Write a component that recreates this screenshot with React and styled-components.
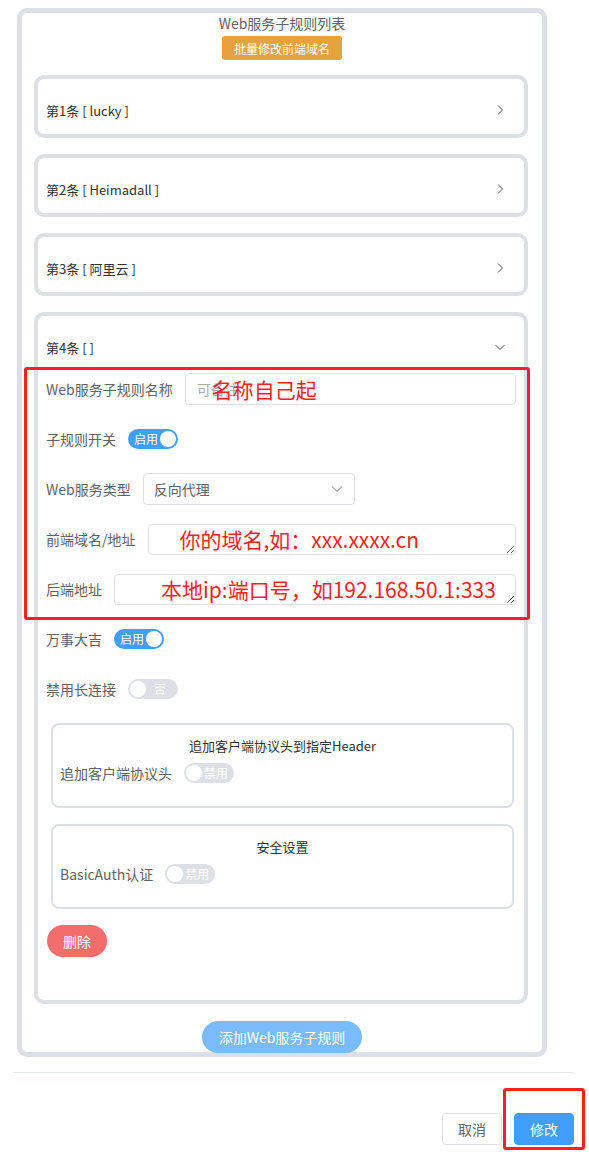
import React from 'react';
import styled, { createGlobalStyle } from 'styled-components';

const GlobalStyle = createGlobalStyle`
  body {
    margin: 0;
    background: #fff;
    font-family: "Noto Sans CJK SC", "Noto Sans", "Liberation Sans", sans-serif;
    color: #606266;
  }
  * { box-sizing: border-box; }
`;

const Page = styled.div`
  position: relative;
  height: 1163px;
  overflow: hidden;
  padding-top: 8px;
`;

const RuleList = styled.div`
  margin-left: 17px;
  width: 530px;
  border: 5px solid #dcdfe6;
  border-radius: 10px;
  display: flex;
  flex-direction: column;
  align-items: center;
`;

const ListTitle = styled.div`
  font-size: 14px;
  line-height: 20px;
  color: #606266;
`;

const BatchButton = styled.button`
  margin-top: 3px;
  height: 24px;
  padding: 0 12px;
  border: none;
  border-radius: 3px;
  background: #e6a23c;
  color: #fff;
  font-family: inherit;
  font-size: 12px;
`;

const Cards = styled.div`
  align-self: stretch;
  margin-top: 15px;
  padding: 0 14px 0 12px;
`;

const Card = styled.div`
  border: 4px solid #dcdfe6;
  border-radius: 10px;
  margin-bottom: 16px;
  padding: 0 8px ${p => (p.$open ? '43px' : '1px')};
`;

const CardHeader = styled.div`
  display: flex;
  align-items: center;
  justify-content: space-between;
  height: 44px;
  margin-top: 9px;
  margin-bottom: 1px;
  font-size: 13px;
  color: #303133;
`;

const Arrow = styled.svg`
  width: 12px;
  height: 12px;
  margin-right: 10px;
  fill: none;
  stroke: #4a4c52;
  stroke-width: 1;
`;

const Form = styled.div`
  padding-top: 3px;
`;

const Item = styled.div`
  display: flex;
  align-items: center;
  height: 32px;
  margin-bottom: 18px;
`;

const Label = styled.label`
  font-size: 14px;
  line-height: 32px;
  color: #606266;
  padding-right: 12px;
  white-space: nowrap;
`;

const Field = styled.div`
  position: relative;
  flex: ${p => (p.$width ? 'none' : '1')};
  width: ${p => (p.$width ? `${p.$width}px` : 'auto')};
  height: ${p => p.$h || 32}px;
`;

const TextInput = styled.input`
  width: 100%;
  height: 100%;
  border: 1px solid #dcdfe6;
  border-radius: 4px;
  padding: 0 11px;
  font-family: inherit;
  font-size: 14px;
  color: #606266;
  outline: none;
  &::placeholder { color: #a8abb2; }
`;

const TextArea = styled.textarea`
  display: block;
  width: 100%;
  height: 100%;
  border: 1px solid #dcdfe6;
  border-radius: 4px;
  padding: 4px 11px;
  font-family: inherit;
  font-size: 14px;
  resize: vertical;
  outline: none;
`;

const SelectBox = styled.div`
  display: flex;
  align-items: center;
  justify-content: space-between;
  height: 100%;
  border: 1px solid #dcdfe6;
  border-radius: 4px;
  padding: 0 11px 0 10px;
  font-size: 14px;
  color: #606266;
`;

const SelectArrow = styled.svg`
  width: 12px;
  height: 12px;
  fill: none;
  stroke: #a8abb2;
  stroke-width: 1.2;
`;

const Note = styled.span`
  position: absolute;
  left: ${p => p.$left}px;
  top: 50%;
  transform: translateY(-50%);
  font-size: 21px;
  line-height: 28px;
  color: #ff1f1f;
  white-space: nowrap;
  pointer-events: none;
`;

const SwitchTrack = styled.span`
  display: inline-flex;
  align-items: center;
  flex-direction: ${p => (p.$on ? 'row' : 'row-reverse')};
  justify-content: space-between;
  width: 50px;
  height: 20px;
  border-radius: 10px;
  padding: 0 2px;
  background: ${p => (p.$on ? '#409eff' : '#dcdfe6')};
`;

const SwitchText = styled.span`
  flex: 1;
  text-align: center;
  font-size: 12px;
  line-height: 20px;
  color: #fff;
  padding-${p => (p.$on ? 'left' : 'right')}: 2px;
`;

const Knob = styled.span`
  width: 16px;
  height: 16px;
  border-radius: 50%;
  background: #fff;
  flex: none;
`;

const SubBox = styled.div`
  margin: 0 2px 16px 5px;
  border: 2px solid #dcdfe6;
  border-radius: 8px;
  padding: 10px 7px 0;
  height: 85px;
`;

const SubTitle = styled.div`
  text-align: center;
  font-size: 13px;
  line-height: 22px;
  color: #303133;
`;

const SubItem = styled(Item)`
  margin-bottom: 0;
`;

const PillButton = styled.button`
  height: 32px;
  border: none;
  border-radius: 16px;
  padding: 0 ${p => p.$pad || 15}px;
  background: ${p => p.$bg};
  color: #fff;
  font-family: inherit;
  font-size: 14px;
  margin-left: ${p => p.$ml || 0}px;
`;

const AddRow = styled.div`
  margin-top: 1px;
  margin-bottom: -1px;
`;

const Divider = styled.div`
  margin: 15px 15px 0 14px;
  height: 1px;
  background: #e4e7ed;
`;

const Footer = styled.div`
  display: flex;
  justify-content: flex-end;
  gap: 12px;
  padding: 40px 15px 0 0;
`;

const FooterButton = styled.button`
  width: ${p => p.$w}px;
  height: 32px;
  border-radius: 4px;
  border: 1px solid ${p => (p.$primary ? '#409eff' : '#dcdfe6')};
  background: ${p => (p.$primary ? '#409eff' : '#fff')};
  color: ${p => (p.$primary ? '#fff' : '#606266')};
  font-family: inherit;
  font-size: 14px;
`;

const Highlight = styled.div`
  position: absolute;
  left: ${p => p.$x}px;
  top: ${p => p.$y}px;
  width: ${p => p.$w}px;
  height: ${p => p.$h}px;
  border: 3px solid #ff1f1f;
  border-radius: 3px;
  pointer-events: none;
`;

const ChevronRight = () => (
  <Arrow viewBox="0 0 12 12"><polyline points="4,1.5 8.5,6 4,10.5" /></Arrow>
);

const ChevronDown = () => (
  <Arrow viewBox="0 0 12 12"><polyline points="1.5,4 6,8.5 10.5,4" /></Arrow>
);

const Switch = ({ on, text }) => (
  <SwitchTrack $on={on}>
    <SwitchText $on={on}>{text}</SwitchText>
    <Knob />
  </SwitchTrack>
);

const collapsed = ['lucky', 'Heimadall', '阿里云'];

export default function App() {
  return (
    <Page>
      <GlobalStyle />
      <RuleList>
        <ListTitle>Web服务子规则列表</ListTitle>
        <BatchButton>批量修改前端域名</BatchButton>
        <Cards>
          {collapsed.map((name, i) => (
            <Card key={name}>
              <CardHeader>
                <span>第{i + 1}条 [ {name} ]</span>
                <ChevronRight />
              </CardHeader>
            </Card>
          ))}
          <Card $open>
            <CardHeader>
              <span>第4条 [ ]</span>
              <ChevronDown />
            </CardHeader>
            <Form>
              <Item>
                <Label>Web服务子规则名称</Label>
                <Field>
                  <TextInput placeholder="可备注" />
                  <Note $left={27}>名称自己起</Note>
                </Field>
              </Item>
              <Item>
                <Label>子规则开关</Label>
                <Switch on text="启用" />
              </Item>
              <Item>
                <Label>Web服务类型</Label>
                <Field $width={212}>
                  <SelectBox>
                    <span>反向代理</span>
                    <SelectArrow viewBox="0 0 12 12"><polyline points="1,3.5 6,8.5 11,3.5" /></SelectArrow>
                  </SelectBox>
                </Field>
              </Item>
              <Item>
                <Label>前端域名/地址</Label>
                <Field $h={31}>
                  <TextArea rows={1} />
                  <Note $left={32}>你的域名,如：xxx.xxxx.cn</Note>
                </Field>
              </Item>
              <Item>
                <Label>后端地址</Label>
                <Field $h={31}>
                  <TextArea rows={1} />
                  <Note $left={47}>本地ip:端口号，如192.168.50.1:333</Note>
                </Field>
              </Item>
              <Item>
                <Label>万事大吉</Label>
                <Switch on text="启用" />
              </Item>
              <Item>
                <Label>禁用长连接</Label>
                <Switch text="否" />
              </Item>
              <SubBox>
                <SubTitle>追加客户端协议头到指定Header</SubTitle>
                <SubItem>
                  <Label>追加客户端协议头</Label>
                  <Switch text="禁用" />
                </SubItem>
              </SubBox>
              <SubBox>
                <SubTitle>安全设置</SubTitle>
                <SubItem>
                  <Label>BasicAuth认证</Label>
                  <Switch text="禁用" />
                </SubItem>
              </SubBox>
              <PillButton $bg="#f56c6c" $pad={16} $ml={1}>删除</PillButton>
            </Form>
          </Card>
        </Cards>
        <AddRow>
          <PillButton $bg="#79bbff" $pad={17}>添加Web服务子规则</PillButton>
        </AddRow>
      </RuleList>
      <Divider />
      <Footer>
        <FooterButton $w={60}>取消</FooterButton>
        <FooterButton $w={60} $primary>修改</FooterButton>
      </Footer>
      <Highlight $x={24} $y={367} $w={506} $h={253} />
      <Highlight $x={503} $y={1088} $w={82} $h={62} />
    </Page>
  );
}
